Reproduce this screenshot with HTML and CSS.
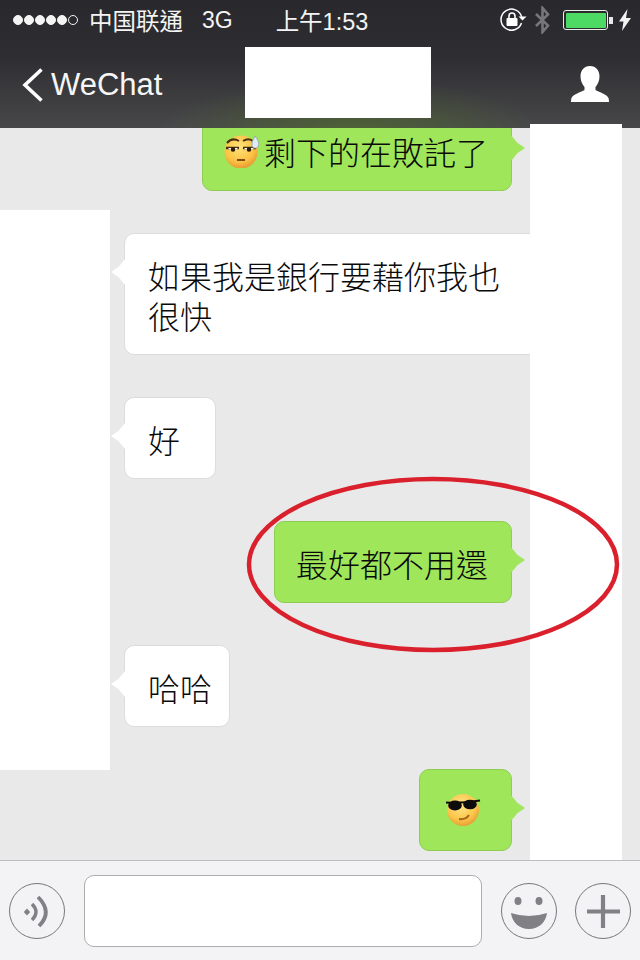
FILE: index.html
```html
<!DOCTYPE html><html><head><meta charset="utf-8">
<title>WeChat</title>
<link rel="stylesheet" href="styles.css">
</head><body>

<div class="phone">

<div class="top">
	<div class="status">
		<div class="st-left">
			<span class="dots"><i></i><i></i><i></i><i></i><i></i><i class="off"></i></span>
			<span class="carrier">中国联通</span>
			<span class="net">3G</span>
		</div>
		<div class="st-time">上午1:53</div>
		<div class="st-right">
			<svg class="ic-lock" width="28" height="26" viewBox="0 0 28 26">
				<path d="M21.5 16a10.500 10.500 0 1 1 .2-6" fill="none" stroke="#fff" stroke-width="1.500"/>
				<path d="M18.500 9.500h8l-4 4z" fill="#fff"/>
				<rect x="6.500" y="11" width="11" height="8" rx="1" fill="#fff"/>
				<path d="M9 11V9a3 3 0 0 1 6 0v2" fill="none" stroke="#fff" stroke-width="1.600"/>
			</svg>
			<svg class="ic-bt" width="17" height="28" viewBox="0 0 17 28">
				<path d="M2 8l12 11.500L8.500 26V2L14 8.500 2 20" fill="none" stroke="#77777a" stroke-width="2.600"/>
			</svg>
			<div class="battery"><div class="battery-in"></div></div>
			<div class="battery-nub"></div>
			<svg class="ic-bolt" width="12" height="22" viewBox="0 0 12 22">
				<path d="M8.500 0L0 12.500h4.500L3 22l9-13H7z" fill="#f2f2f2"/>
			</svg>
		</div>
	</div>
	<div class="nav">
		<a class="back">
			<svg width="24" height="36" viewBox="0 0 24 36">
				<path d="M20.500 2.500L4 18l16.500 15.500" fill="none" stroke="#fff" stroke-width="3.600"/>
			</svg>
			<span>WeChat</span>
		</a>
		<svg class="ic-person" width="38" height="36" viewBox="0 0 38 36">
			<path d="M19 0c6 0 9.500 4.500 9.500 10.500 0 4.500-2 8-4 10.500v3c3 2 11 4 13 8 .4 1.500.5 3 .5 4H0c0-1 .1-2.500.5-4 2-4 10-6 13-8v-3c-2-2.500-4-6-4-10.500C9.500 4.500 13 0 19 0z" fill="#fff"/>
		</svg>
	</div>
</div>

<div class="chat">
	<div class="msg me first">
		<div class="bubble">
			<svg class="emoji" width="36" height="34" viewBox="0 0 36 34">
				<defs><radialGradient id="fa" cx=".45" cy=".35" r=".75"><stop offset="0" stop-color="#ffe27a"/><stop offset=".6" stop-color="#fbc243"/><stop offset="1" stop-color="#e0842a"/></radialGradient></defs>
				<circle cx="17" cy="18" r="16.500" fill="url(#fa)"/>
				<path d="M3 9q5-6 12-2M19 7q6-4 11 1" fill="none" stroke="#4a2f10" stroke-width="2"/>
				<path d="M2 14h13M19 14h13" stroke="#4a3010" stroke-width="2.400"/>
				<path d="M4 14q5 6 10 0zM20 14q5 6 10 0z" fill="#fff"/>
				<circle cx="9" cy="15.500" r="2.300" fill="#2a1a08"/><circle cx="25" cy="15.500" r="2.300" fill="#2a1a08"/>
				<path d="M13 26h8" stroke="#7a4a18" stroke-width="2"/>
				<path d="M31 2q5 6 3.500 10a3.500 3.500 0 0 1-6.500 0q-1-4 3-10z" fill="#dfeaf2" stroke="#7f97a8" stroke-width=".7"/>
			</svg>剩下的在敗託了
		</div>
	</div>
	<div class="msg you">
		<div class="bubble">如果我是銀行要藉你我也很快</div>
	</div>
	<div class="msg you">
		<div class="bubble">好</div>
	</div>
	<div class="msg me">
		<div class="bubble">最好都不用還</div>
	</div>
	<div class="msg you">
		<div class="bubble">哈哈</div>
	</div>
	<div class="msg me">
		<div class="bubble only-emoji">
			<svg class="emoji" width="36" height="34" viewBox="0 0 36 34">
				<defs><radialGradient id="fb" cx=".45" cy=".35" r=".75"><stop offset="0" stop-color="#ffe68a"/><stop offset=".6" stop-color="#fbc64a"/><stop offset="1" stop-color="#e08a2c"/></radialGradient></defs>
				<circle cx="18" cy="17" r="16" fill="url(#fb)"/>
				<path d="M1 9.500q16 1 34-2" fill="none" stroke="#0c0c0c" stroke-width="2"/>
				<ellipse cx="10" cy="12.500" rx="6.800" ry="5" fill="#0c0c0c"/>
				<ellipse cx="25" cy="11.500" rx="6.800" ry="4.800" fill="#0c0c0c"/>
				<path d="M14 26q7 1 10-4" fill="none" stroke="#a8641a" stroke-width="2"/>
			</svg>
		</div>
	</div>
</div>

<div class="bar">
	<div class="round">
		<svg width="54" height="54" viewBox="0 0 54 54">
			<path d="M17 24.500l3.200 3.500-3.200 3.500-3.200-3.500z" fill="#808085"/>
			<path d="M22 20q8 8 0 16" fill="none" stroke="#808085" stroke-width="3.400"/>
			<path d="M28 13q15 15 1 29" fill="none" stroke="#808085" stroke-width="3.800"/>
		</svg>
	</div>
	<div class="input"></div>
	<div class="round">
		<svg width="54" height="54" viewBox="0 0 54 54">
			<ellipse cx="16" cy="17" rx="3.500" ry="4" fill="#808085"/>
			<ellipse cx="37" cy="17" rx="3.500" ry="4" fill="#808085"/>
			<path d="M9 29q9 3 18 3t18-3c-1 9-8 16-18 16S10 38 9 29z" fill="#808085"/>
		</svg>
	</div>
	<div class="round">
		<svg width="54" height="54" viewBox="0 0 54 54">
			<path d="M27 11v33M11 27.500h33" stroke="#808085" stroke-width="4.200"/>
		</svg>
	</div>
</div>

<!-- things painted over the screenshot -->
<div class="mask mask-title"></div>
<div class="mask mask-left"></div>
<div class="mask mask-right"></div>
<svg class="circled" width="640" height="960" viewBox="0 0 640 960">
	<ellipse cx="433" cy="564.500" rx="184" ry="85.500" fill="none" stroke="#d9202c" stroke-width="4.500"/>
</svg>

</div>

</body></html>
```

FILE: styles.css
```css
body {
	margin: 0;
	font-family: "Liberation Sans", "Noto Sans CJK TC", sans-serif;
}
.phone {
	position: relative;
	width: 640px;
	height: 960px;
	display: flex;
	flex-direction: column;
	overflow: hidden;
	background: #e9e9e9;
}

/* top: status + nav */
.top {
	height: 128px;
	flex: none;
	color: #f4f4f4;
	background:
		radial-gradient(ellipse 190px 56px at 350px 134px, rgba(82, 118, 40, .6), rgba(82, 118, 40, 0)),
		linear-gradient(#29292d, #2e2e32 45%, #48484a);
}
.status {
	height: 40px;
	display: grid;
	grid-template-columns: 1fr auto 1fr;
	align-items: center;
	padding: 0 9px 0 13px;
	font-size: 23px;
}
.st-left {
	display: flex;
	align-items: center;
}
.dots {
	display: flex;
	gap: 1px;
	margin-right: 11px;
}
.dots i {
	width: 10px;
	height: 10px;
	border-radius: 50%;
	background: #f4f4f4;
	box-sizing: border-box;
	border: 1px solid #f4f4f4;
}
.dots i.off {
	background: none;
}
.carrier {
	font-size: 23.500px;
	margin-right: 19px;
}
.st-time {
	font-size: 23.500px;
}
.st-right {
	display: flex;
	align-items: center;
	justify-content: flex-end;
}
.ic-lock {
	margin-right: 6px;
}
.ic-bt {
	margin-right: 12px;
}
.battery {
	width: 45px;
	height: 20px;
	box-sizing: border-box;
	border: 1.500px solid #e8efe8;
	border-radius: 3px;
	padding: 1.500px;
}
.battery-in {
	height: 100%;
	background: #4cd964;
	border-radius: 1px;
}
.battery-nub {
	width: 4px;
	height: 7px;
	margin-left: 1px;
	margin-right: 6px;
	background: #e8e8e8;
}
.nav {
	height: 88px;
	display: flex;
	align-items: center;
	justify-content: space-between;
	padding: 0 31px 0 21px;
}
.back {
	display: flex;
	align-items: center;
	gap: 6px;
	font-size: 31px;
	color: #f6f6f6;
	margin-top: 1px;
}

/* messages */
.chat {
	flex: 1;
	min-height: 0;
	overflow: hidden;
	display: flex;
	flex-direction: column;
	gap: 42px;
	background: #e9e9e9;
}
.msg {
	display: flex;
}
.msg.first {
	margin-top: -19px;
}
.msg.me {
	justify-content: flex-end;
	padding-right: 128px;
}
.msg.you {
	padding-left: 124px;
}
.bubble {
	position: relative;
	box-sizing: border-box;
	min-width: 92px;
	max-width: 416px;
	padding: 21px 17px 19px 23px;
	border-radius: 10px;
	border: 1px solid #dcdcdc;
	background: #fff;
	font-family: "Noto Sans CJK TC", sans-serif;
	font-weight: 300;
	font-size: 32px;
	line-height: 40px;
	color: #0a0a0a;
}
/* tail sits at the same height on every bubble, not at the middle */
.bubble::after {
	content: "";
	position: absolute;
	top: 25px;
	left: -14px;
	width: 14px;
	height: 26px;
	background: #fff;
	clip-path: polygon(100% 0, 55% 30%, 0 50%, 55% 70%, 100% 100%);
}
.me .bubble {
	padding: 21px 23px 19px 21px;
	background: #9fe65b;
	border-color: #8dce52;
}
.me .bubble::after {
	left: auto;
	right: -14px;
	background: #9fe65b;
	clip-path: polygon(0 0, 45% 30%, 100% 50%, 45% 70%, 0 100%);
}
.bubble.only-emoji {
	width: 93px;
	height: 82px;
	padding: 0 0 0 25px;
	display: flex;
	align-items: center;
}
.emoji {
	vertical-align: -3px;
	margin-right: 4px;
}

/* input */
.bar {
	height: 100px;
	flex: none;
	box-sizing: border-box;
	border-top: 1px solid #bdbdbd;
	background: #f3f3f5;
	display: flex;
	align-items: center;
	padding: 0 9px;
}
.round {
	width: 56px;
	height: 56px;
	flex: none;
	box-sizing: border-box;
	border: 1px solid #77777b;
	border-radius: 50%;
	margin-top: 1px;
}
.round + .round {
	margin-left: 18px;
}
.round svg {
	display: block;
}
.input {
	flex: 1;
	height: 72px;
	margin: 1px 19px 0 19px;
	box-sizing: border-box;
	border: 1px solid #adadad;
	border-radius: 10px;
	background: #fff;
}

/* overlays */
.mask {
	position: absolute;
	background: #fff;
}
.mask-title {
	left: 245px;
	top: 47px;
	width: 186px;
	height: 71px;
}
.mask-left {
	left: 0;
	top: 210px;
	width: 110px;
	height: 560px;
}
.mask-right {
	left: 530px;
	top: 124px;
	width: 92px;
	height: 736px;
}
.circled {
	position: absolute;
	left: 0;
	top: 0;
}
```
